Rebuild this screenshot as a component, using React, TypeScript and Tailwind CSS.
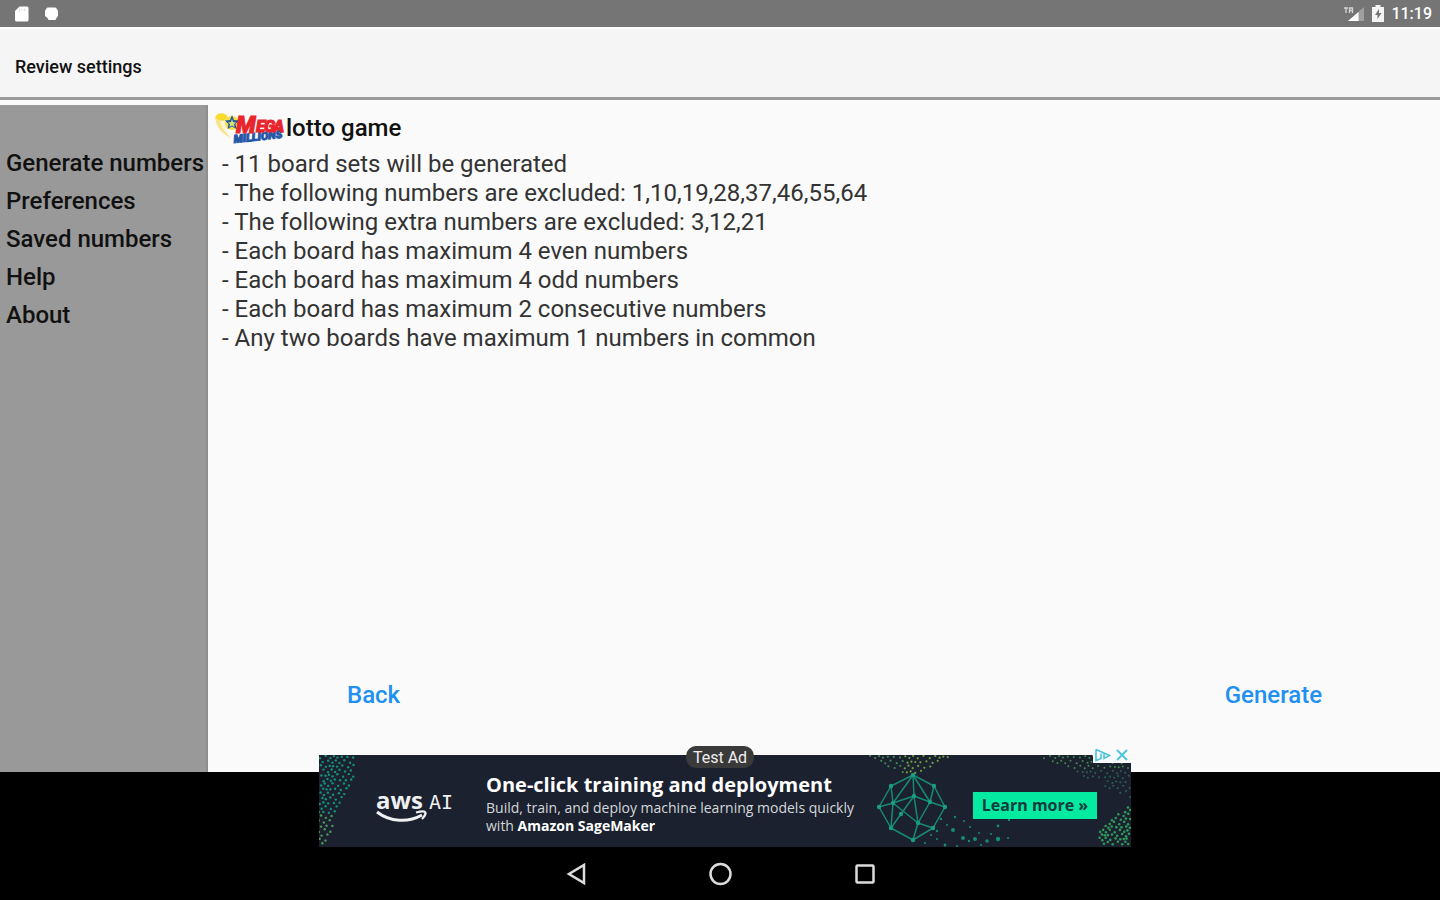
import type { ReactNode } from 'react';

const menuItems = ['Generate numbers', 'Preferences', 'Saved numbers', 'Help', 'About'];

const settings = [
  '11 board sets will be generated',
  'The following numbers are excluded: 1,10,19,28,37,46,55,64',
  'The following extra numbers are excluded: 3,12,21',
  'Each board has maximum 4 even numbers',
  'Each board has maximum 4 odd numbers',
  'Each board has maximum 2 consecutive numbers',
  'Any two boards have maximum 1 numbers in common',
];

type Dot = { x: number; y: number; r: number; color: string };

/** Fills a region with a slightly irregular grid of dots. */
function scatter(
  box: [number, number, number, number],
  step: number,
  inside: (x: number, y: number) => boolean,
  colorAt: (x: number, y: number) => string,
  radius = 1,
): Dot[] {
  const dots: Dot[] = [];
  const [x0, y0, x1, y1] = box;
  let row = 0;
  for (let y = y0; y <= y1; y += step, row++) {
    for (let x = x0 + (row % 2) * (step / 2), col = 0; x <= x1; x += step, col++) {
      const jx = x + Math.sin(row * 12.9 + col * 7.3) * 1.3;
      const jy = y + Math.cos(row * 5.1 + col * 9.7) * 1.3;
      if (inside(jx, jy)) dots.push({ x: jx, y: jy, r: radius, color: colorAt(jx, jy) });
    }
  }
  return dots;
}

const adDots: Dot[] = [
  ...scatter([1, 2, 40, 91], 4.6, (x, y) => x < (y < 20 ? 34 + y * 0.15 : 37 - (y - 20) * 0.45), (_, y) => (y > 58 ? '#4a9a5a' : '#16907a'), 1.2),
  ...scatter([545, 2, 640, 22], 5, (x, y) => y < 22 - Math.abs(x - 590) * 0.48, (x) => (x > 585 ? '#6fa043' : '#3f8a50'), 1.1),
  ...scatter([725, 2, 811, 50], 5, (x, y) => y < 24 - (770 - x) * 0.45 && (y < 24 || x > 785), (_, y) => (y < 14 ? '#438a4c' : '#2c6255')),
  ...scatter([780, 52, 811, 91], 4, (x, y) => x > 775 + Math.abs(y - 81) * 1.1, () => '#2f9a5c', 1.3),
];

const sparks: [number, number, number][] = [
  [622, 64, 1.2], [628, 70, 1], [636, 62, 1.2], [634, 75, 2], [645, 66, 1], [651, 72, 1], [644, 83, 2], [650, 86, 1.2],
  [656, 84, 2], [660, 78, 1], [668, 86, 1.8], [662, 90, 1], [679, 84, 2.2], [679, 71, 1.4], [690, 65, 1.2], [689, 83, 1],
  [612, 80, 1], [618, 84, 1], [606, 88, 1], [626, 90, 1.4], [638, 91, 1], [672, 79, 1], [618, 76, 1.2],
];

const globeNodes: [number, number][] = [
  [594, 20], [615, 31], [626, 52], [614, 73], [594, 85], [572, 73], [560, 52], [572, 31],
  [574, 48], [595, 41], [611, 47], [599, 68], [582, 59],
];

const globeEdges: [number, number][] = [
  [0, 1], [1, 2], [2, 3], [3, 4], [4, 5], [5, 6], [6, 7], [7, 0],
  [0, 8], [0, 9], [0, 10], [1, 10], [7, 8], [6, 8], [8, 9], [9, 10], [10, 2],
  [9, 11], [8, 11], [10, 11], [8, 5], [12, 5], [12, 9], [11, 4], [11, 3],
];

function AdArtwork() {
  return (
    <svg viewBox="0 0 812 92" preserveAspectRatio="none" aria-hidden="true" className="absolute inset-0 h-full w-full">
      {adDots.map((d, i) => (
        <circle key={i} cx={d.x} cy={d.y} r={d.r} fill={d.color} />
      ))}
      {sparks.map(([x, y, r], i) => (
        <circle key={i} cx={x} cy={y} r={r} fill="#188a76" />
      ))}
      <g stroke="#178a72" strokeWidth="1.5">
        {globeEdges.map(([a, b], i) => (
          <line key={i} x1={globeNodes[a][0]} y1={globeNodes[a][1]} x2={globeNodes[b][0]} y2={globeNodes[b][1]} />
        ))}
      </g>
      {globeNodes.map(([x, y], i) => (
        <circle key={i} cx={x} cy={y} r="2.2" fill="#1d9c80" />
      ))}
    </svg>
  );
}

function StatusBar() {
  return (
    <div className="flex h-[27px] items-center justify-between bg-[#757575] pr-2 pl-[14px]">
      <div className="flex items-center gap-[14px]">
        <svg width="16" height="18" viewBox="0 0 16 18" aria-hidden="true">
          <path d="M5.5 1.5H13a1.5 1.5 0 0 1 1.5 1.5V15a1.5 1.5 0 0 1-1.5 1.5H2.5A1.5 1.5 0 0 1 1 15V6z" fill="#fff" />
          <path d="M5.5 4v2.500M8 3.500V6M10.500 3.500V6" stroke="#ddd" strokeWidth="1" />
        </svg>
        <svg width="16" height="18" viewBox="0 0 16 18" aria-hidden="true">
          <path d="M3.500 2.500h8l1.500 1.500 1 2v5l-1.500 2-1 2h-7l-1-2L1 11V6l1-2z" fill="#fff" />
        </svg>
      </div>
      <div className="flex items-center gap-[6px]">
        <svg width="22" height="18" viewBox="0 0 22 18" aria-hidden="true">
          <path d="M21 2v14H5z" fill="#a0a0a0" />
          <path d="M15.500 7v9H5z" fill="#fff" />
          <path d="M1 3h4M3 3v5M6.500 8V3h3v5M6.500 5.500h3" stroke="#d5d5d5" strokeWidth="1.300" fill="none" />
        </svg>
        <svg width="14" height="18" viewBox="0 0 14 18" aria-hidden="true">
          <path d="M4.500 0h5v2H13v15H1V2h3.500z" fill="#f4f4f4" />
          <path d="M8 4 4 10h2.500v4L10.500 8H8z" fill="#757575" />
        </svg>
        <span className="text-base leading-[27px] font-medium text-white">11:19</span>
      </div>
    </div>
  );
}

function MegaLogo() {
  return (
    <svg width="72" height="36" viewBox="0 0 72 36" role="img" aria-label="Mega Millions" className="shrink-0">
      <path d="M1 7C3 2 9 2 13 5l2 5-8 3c2 6 5 10 10 15C8 24 2 17 1 7z" fill="#fbe58a" />
      <path d="M6 11c2 7 5 11 9 14-3-4-4-9-4-14z" fill="#fdf6d5" />
      <ellipse cx="7.500" cy="7" rx="5.500" ry="3.500" fill="#f8dc2c" />
      <circle cx="18" cy="13" r="7" fill="#f4df46" />
      <path d="m18 5 2 5 5 .500-3.500 3.500 1 5-4.500-2.500L13.500 19l1-5L11 10.500 16 10z" fill="#24599e" />
      <path d="m18 9 1 3 3 .500-2 1.500.500 3-2.500-1.500L15.500 17l.500-3-2-1.500 3-.500z" fill="#d8e47a" />
      <g fontFamily="Roboto, sans-serif" fontWeight="900" fontStyle="italic">
        <text x="20" y="33" fontSize="11" fill="#2457a8" stroke="#2457a8" strokeWidth="1" transform="rotate(-6 20 33)">MILLIONS</text>
        <text x="22" y="23" fontSize="23" fill="#e8252c" stroke="#e8252c" strokeWidth="1">M</text>
        <text x="42" y="22" fontSize="17" fill="#e8252c" stroke="#e8252c" strokeWidth="1">E</text>
        <text x="50" y="22" fontSize="17" fill="#e8252c" stroke="#e8252c" strokeWidth="1">G</text>
        <text x="59" y="22" fontSize="17" fill="#e8252c" stroke="#e8252c" strokeWidth="1">A</text>
      </g>
    </svg>
  );
}

function AwsLogo() {
  return (
    <div className="relative flex w-20 items-baseline gap-[6px] text-[#eef0f2]">
      <span className="font-['Open_Sans',sans-serif] text-2xl leading-6 font-bold">aws</span>
      <span className="font-['DejaVu_Sans_Mono',monospace] text-xl leading-6">AI</span>
      <svg width="52" height="15" viewBox="0 0 52 15" aria-hidden="true" className="absolute top-[21px] left-0">
        <path d="M1 3C14 13 32 14 46 6" fill="none" stroke="#eef0f2" strokeWidth="3" />
        <path d="M40 3.500c4-1 8-1.500 9-.500s0 4-3 7" fill="none" stroke="#eef0f2" strokeWidth="2.200" />
      </svg>
    </div>
  );
}

function AdBanner() {
  return (
    <aside
      aria-label="Advertisement"
      className="absolute -top-[17px] left-1/2 ml-[5px] flex h-[92px] w-[812px] max-w-full -translate-x-1/2 items-center bg-[#1b212e] font-['Open_Sans',sans-serif] text-white"
    >
      <AdArtwork />
      <div className="relative flex w-full items-center pr-[34px] pl-[57px]">
        <AwsLogo />
        <div className="ml-[30px] flex-1 pt-1">
          <p className="text-xl leading-7 font-bold">One-click training and deployment</p>
          <p className="text-sm leading-[18px] text-[#d5d8dc]">
            Build, train, and deploy machine learning models quickly
            <br />
            with <b className="text-white">Amazon SageMaker</b>
          </p>
        </div>
        <a href="#learn-more" className="mt-2 flex h-[27px] w-[124px] items-center justify-center bg-[#05eaa1] text-base font-bold text-[#123c3c]">
          Learn more »
        </a>
      </div>
      <span className="absolute -top-[9px] left-[367px] flex h-[22px] w-[68px] items-center justify-center rounded-[10px] bg-[#3a3a3a] pt-px font-[Roboto,sans-serif] text-base text-[#eeeeee]">
        Test Ad
      </span>
      <div className="absolute -top-2 right-0 flex h-4 items-center gap-1 bg-[#fafafa] px-[2px]">
        <svg width="16" height="14" viewBox="0 0 16 14" aria-hidden="true">
          <path d="M1 1.500 14.500 7.500 9 10.500 V5M1 1.500v11l5-2V5.500" fill="none" stroke="#4cc3dc" strokeWidth="1.600" />
        </svg>
        <button type="button" aria-label="Close ad">
          <svg width="14" height="14" viewBox="0 0 14 14" aria-hidden="true">
            <path d="m2 2 10 10M12 2 2 12" stroke="#4cc3dc" strokeWidth="1.800" />
          </svg>
        </button>
      </div>
    </aside>
  );
}

function NavButton({ label, children }: { label: string; children: ReactNode }) {
  return (
    <button type="button" aria-label={label}>
      <svg width="26" height="26" viewBox="0 0 26 26" fill="none" stroke="#dcdcdc" strokeWidth="2.500" aria-hidden="true">
        {children}
      </svg>
    </button>
  );
}

export default function App() {
  return (
    <div className="flex min-h-screen flex-col bg-[#fafafa] font-[Roboto,sans-serif] text-[#111111]">
      <StatusBar />
      <header className="flex h-[73px] items-center border-t-2 border-b-[3px] border-t-white border-b-[#9b9b9b] bg-[#f5f5f5] px-[15px] pt-[7px]">
        <h1 className="text-lg leading-6 font-medium">Review settings</h1>
      </header>

      <div className="flex flex-1 pt-[5px]">
        <nav className="w-[208px] shrink-0 border-r-2 border-[#8e8e8e] bg-[#999999] pt-[39px] pl-[6px]">
          <ul>
            {menuItems.map((item) => (
              <li key={item}>
                <a href="#menu" className="block text-2xl leading-[38px] font-medium whitespace-nowrap">
                  {item}
                </a>
              </li>
            ))}
          </ul>
        </nav>

        <main className="flex flex-1 flex-col pt-[5px]">
          <div className="flex h-9 items-center pl-[6px]">
            <MegaLogo />
            <h2 className="text-2xl leading-9 font-medium">lotto game</h2>
          </div>
          <ul className="pt-1 pl-[14px] text-2xl leading-[29px] text-[#333333]">
            {settings.map((line) => (
              <li key={line}>- {line}</li>
            ))}
          </ul>
          <div className="mt-auto flex justify-between pr-[118px] pb-[59px] pl-[139px] text-2xl leading-9 font-medium text-[#2190f3]">
            <button type="button">Back</button>
            <button type="button">Generate</button>
          </div>
        </main>
      </div>

      <footer className="relative flex h-32 items-end justify-center bg-black pb-[13px]">
        <AdBanner />
        <div className="flex gap-[118px]">
          <NavButton label="Back">
            <path d="M21 4v18L6 13z" />
          </NavButton>
          <NavButton label="Home">
            <circle cx="13.500" cy="13" r="10" />
          </NavButton>
          <NavButton label="Recent apps">
            <rect x="5.500" y="4.500" width="17" height="17" rx="1" />
          </NavButton>
        </div>
      </footer>
    </div>
  );
}
